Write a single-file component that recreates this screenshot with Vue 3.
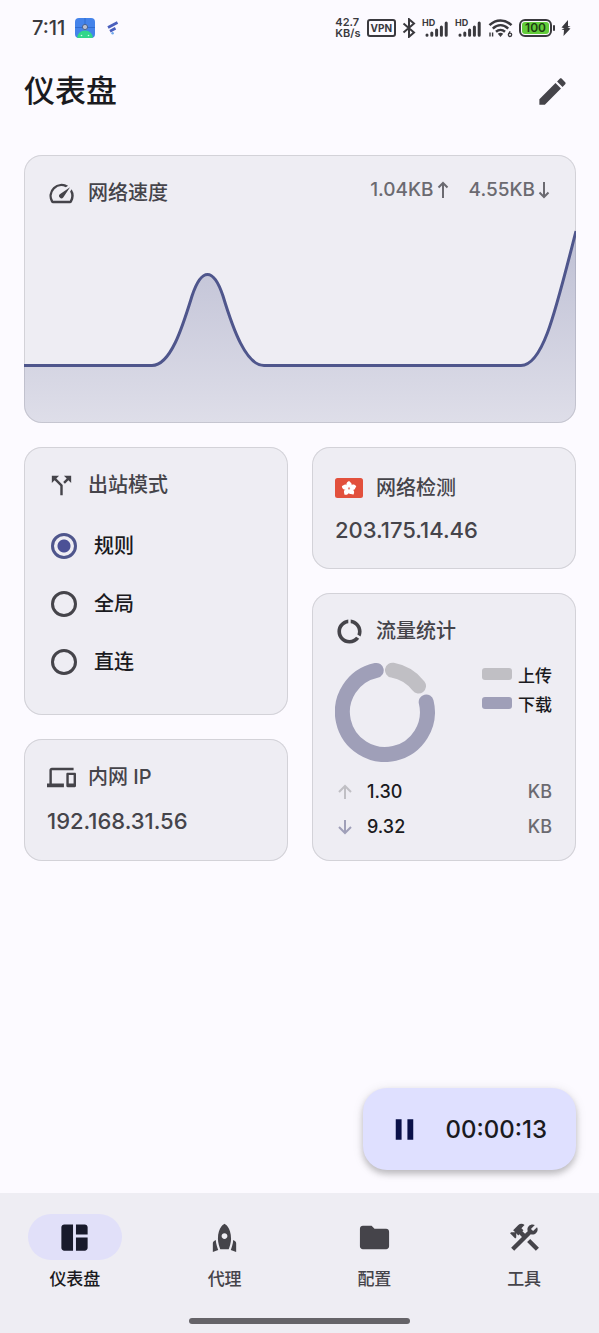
<script setup>
import { ref } from 'vue'

const modes = [
  { id: 'rule', label: '规则' },
  { id: 'global', label: '全局' },
  { id: 'direct', label: '直连' },
]
const mode = ref('rule')

const tabs = [
  {
    id: 'dashboard',
    label: '仪表盘',
    icon: 'M11 21H5c-1.1 0-2-.9-2-2V5c0-1.1.9-2 2-2h6v18zm2 0h6c1.1 0 2-.9 2-2v-7h-8v9zm8-11V5c0-1.1-.9-2-2-2h-6v7h8z',
  },
  {
    id: 'proxies',
    label: '代理',
    icon: 'M12 2.5s4.500 2.040 4.500 10.500c0 2.490-1.040 5.570-1.600 7H9.100c-.56-1.430-1.600-4.510-1.600-7C7.500 4.540 12 2.500 12 2.500zm2 8.500c0-1.100-.9-2-2-2s-2 .9-2 2 .9 2 2 2 2-.9 2-2zm-6.310 9.520c-.48-1.230-1.520-4.170-1.670-6.870l-1.130.75c-.56.38-.89 1-.89 1.670V22l3.690-1.480zM20 22v-5.930c0-.67-.33-1.290-.89-1.660l-1.130-.75c-.15 2.690-1.200 5.640-1.670 6.870L20 22z',
  },
  {
    id: 'profiles',
    label: '配置',
    icon: 'M10 4H4c-1.100 0-1.990.9-1.990 2L2 18c0 1.100.9 2 2 2h16c1.100 0 2-.9 2-2V8c0-1.100-.9-2-2-2h-8l-2-2z',
  },
  {
    id: 'tools',
    label: '工具',
    icon: 'M13.780 15.170l2.120-2.120 6 6-2.120 2.120zM17.500 10c1.930 0 3.500-1.570 3.500-3.500 0-.58-.16-1.120-.41-1.600l-2.700 2.700-1.490-1.490 2.700-2.700c-.48-.25-1.020-.41-1.600-.41C15.570 3 14 4.570 14 6.500c0 .41.08.8.21 1.160l-1.850 1.850-1.780-1.780.71-.71-1.410-1.410L12 3.490c-1.170-1.170-3.070-1.170-4.240 0L4.220 7.030l1.410 1.410H2.810l-.71.71 3.540 3.540.71-.71V9.150l1.410 1.410.71-.71 1.780 1.780-7.410 7.410 2.120 2.120L16.340 9.790c.36.13.75.21 1.160.21z',
  },
]
const tab = ref('dashboard')

const signals = [0, 1]
const petals = [0, 72, 144, 216, 288]
</script>

<template>
  <div class="app">
    <div class="status">
      <div class="status-side">
        <span class="clock">7:11</span>
        <svg class="app-badge" viewBox="0 0 20 20" aria-hidden="true">
          <defs>
            <clipPath id="badge-clip"><rect width="20" height="20" rx="4" /></clipPath>
          </defs>
          <g clip-path="url(#badge-clip)">
            <rect width="20" height="20" fill="#4483ea" />
            <path d="M0 9.500h20M10 0v9" stroke="#2f6cd0" stroke-width="1" />
            <path d="M2 20a8 7.500 0 0 1 16 0z" fill="#33d68b" />
            <circle cx="10" cy="9" r="2.600" fill="#b9bfd0" stroke="#4a638f" />
            <circle cx="6.500" cy="17.500" r=".8" fill="#c9ffe4" />
            <circle cx="13.500" cy="17.500" r=".8" fill="#c9ffe4" />
          </g>
        </svg>
        <svg class="proxy-mark" viewBox="0 0 12 14" aria-hidden="true">
          <g fill="none" stroke="#4a5fbd" stroke-width="2.800">
            <path d="M1 6.500l9.500-5" />
            <path d="M3 10.200l5.500-2.900" />
          </g>
          <circle cx="5.600" cy="12.300" r="1.200" fill="#6fa8ec" />
        </svg>
      </div>
      <div class="status-side">
        <span class="rate"><span>42.7</span><span>KB/s</span></span>
        <span class="vpn">VPN</span>
        <svg class="bluetooth" viewBox="0 0 14 20" aria-hidden="true">
          <path d="M1.500 5.500l10.500 9L7 18.800V1.200l5 4.300-10.500 9" fill="none" stroke="#3a393e" stroke-width="2" />
        </svg>
        <span v-for="s in signals" :key="s" class="signal">
          <span class="hd">HD</span>
          <svg viewBox="0 0 24 16" aria-hidden="true">
            <g stroke="#3a393e" stroke-width="3" stroke-linecap="round">
              <path d="M2 14v.2M6.800 12v2.200M11.600 9v5.200M16.400 6v8.200M21.200 2v12.200" />
            </g>
          </svg>
        </span>
        <svg class="wifi" viewBox="0 0 25 20" aria-hidden="true">
          <g fill="none" stroke="#3a393e" stroke-width="2.500">
            <path d="M1.500 7.200C8 .8 17 .8 23.500 7.200" />
            <path d="M4.800 10.600c4.700-4.400 10.700-4.400 15.400 0" />
            <path d="M8 13.800c2.700-2.400 6.300-2.400 9 0" />
          </g>
          <path d="M9.800 15.700c1.600-1.200 3.800-1.200 5.400 0L12.500 19z" fill="#3a393e" />
          <path d="M2 18.500v-4M4.600 14.500v4" stroke="#3a393e" stroke-width="1.400" />
          <circle cx="22" cy="16.800" r="1.700" fill="none" stroke="#3a393e" stroke-width="1.300" />
          <path d="M20.600 16.200l1.500-3" stroke="#3a393e" stroke-width="1.300" />
        </svg>
        <span class="battery"><span>100</span></span>
        <svg class="bolt" viewBox="0 0 10 16" aria-hidden="true">
          <path d="M7 0L.5 7.500l3 .8-3 1.200 2.500.6L2.500 16 9.500 8.500l-3-.8 3-1.200-2.500-.6z" fill="#3a393e" />
        </svg>
      </div>
    </div>

    <header class="bar">
      <h1>仪表盘</h1>
      <button class="edit" type="button" aria-label="编辑">
        <svg class="icon-lg" viewBox="0 0 24 24" aria-hidden="true">
          <path d="M3 17.250V21h3.750L17.810 9.940l-3.750-3.750L3 17.250zM20.710 7.040c.39-.39.39-1.020 0-1.410l-2.340-2.340c-.39-.39-1.020-.39-1.410 0l-1.830 1.830 3.750 3.750 1.830-1.830z" />
        </svg>
      </button>
    </header>

    <main>
      <div class="grid">
        <section class="card speed">
          <div class="speed-head">
            <h2 class="title">
              <svg class="icon" viewBox="0 0 24 24" aria-hidden="true">
                <path d="M20.380 8.570l-1.230 1.850a8 8 0 0 1-.22 7.580H5.070A8 8 0 0 1 15.580 6.850l1.850-1.230A10 10 0 0 0 3.350 19a2 2 0 0 0 1.720 1h13.850a2 2 0 0 0 1.740-1 10 10 0 0 0-.27-10.440zm-9.790 6.840a2 2 0 0 0 2.830 0l5.660-8.490-8.490 5.660a2 2 0 0 0 0 2.830z" />
              </svg>
              网络速度
            </h2>
            <p class="rates">
              <span>1.04KB<svg class="arrow" viewBox="0 0 12 18" aria-hidden="true"><path d="M6 17V2M1.500 6.500L6 2l4.500 4.500" /></svg></span>
              <span>4.55KB<svg class="arrow" viewBox="0 0 12 18" aria-hidden="true"><path d="M6 1v15M1.500 11.500L6 16l4.500-4.500" /></svg></span>
            </p>
          </div>
          <svg class="chart" viewBox="0 0 552 198" preserveAspectRatio="none" aria-hidden="true">
            <defs>
              <linearGradient id="chart-fill" x1="0" y1="0" x2="0" y2="1">
                <stop offset="0" stop-color="#4f568c" stop-opacity=".3" />
                <stop offset="1" stop-color="#4f568c" stop-opacity=".1" />
              </linearGradient>
            </defs>
            <path
              d="M0 140.500H128C147 140.500 159 100 168 71C173 56 178 49.500 183.500 49.500C189 49.500 194 56 199 71C209 104 222 140.500 240 140.500H497C519 140.500 531 88 552 6V198H0z"
              fill="url(#chart-fill)"
            />
            <path
              d="M0 140.500H128C147 140.500 159 100 168 71C173 56 178 49.500 183.500 49.500C189 49.500 194 56 199 71C209 104 222 140.500 240 140.500H497C519 140.500 531 88 552 6"
              fill="none"
              stroke="#4f568c"
              stroke-width="3"
              vector-effect="non-scaling-stroke"
            />
          </svg>
        </section>

        <section class="card tall">
          <h2 class="title">
            <svg class="icon" viewBox="0 0 24 24" aria-hidden="true">
              <path d="M14 4l2.290 2.290-2.880 2.880 1.420 1.420 2.880-2.880L20 10V4zm-4 0H4v6l2.290-2.290 4.710 4.700V20h2v-8.410l-5.290-5.300z" />
            </svg>
            出站模式
          </h2>
          <div class="modes">
            <label v-for="m in modes" :key="m.id" class="mode">
              <input v-model="mode" type="radio" name="mode" :value="m.id" />
              {{ m.label }}
            </label>
          </div>
        </section>

        <section class="card detect">
          <h2 class="title">
            <svg class="flag" viewBox="0 0 28 20" aria-hidden="true">
              <rect width="28" height="20" rx="2.500" fill="#e2503c" />
              <g transform="translate(14 10.500)" fill="#fff">
                <path v-for="a in petals" :key="a" :transform="`rotate(${a})`" d="M0-.5C-3.600-2.300-3.400-6.500.3-7.600C.4-6.600 3.200-5.800 2.700-3.400C2.400-1.800.9-1 0-.5z" />
              </g>
              <circle cx="14" cy="10.500" r="1" fill="#e88a7e" />
            </svg>
            网络检测
          </h2>
          <p class="ip">203.175.14.46</p>
        </section>

        <section class="card tall traffic">
          <h2 class="title">
            <svg class="icon" viewBox="0 0 24 24" aria-hidden="true">
              <path d="M13 2.050v3.030c3.390.49 6 3.390 6 6.920 0 .9-.18 1.750-.48 2.540l2.600 1.530c.56-1.240.88-2.620.88-4.070 0-5.180-3.950-9.450-9-9.950zM12 19c-3.870 0-7-3.130-7-7 0-3.530 2.610-6.430 6-6.920V2.050c-5.060.5-9 4.760-9 9.950 0 5.520 4.470 10 9.990 10 3.310 0 6.240-1.610 8.060-4.090l-2.600-1.530C16.170 17.980 14.210 19 12 19z" />
            </svg>
            流量统计
          </h2>
          <div class="usage">
            <svg class="donut" viewBox="0 0 100 100" aria-hidden="true">
              <g fill="none" stroke-width="15" stroke-linecap="round">
                <path d="M57.500 8.200A42.500 42.500 0 0 1 83.500 24" stroke="#c0bfc4" />
                <path d="M91.200 40A42.500 42.500 0 1 1 41.200 8.400" stroke="#9f9fb8" />
              </g>
            </svg>
            <ul class="legend">
              <li><i class="swatch up"></i>上传</li>
              <li><i class="swatch down"></i>下载</li>
            </ul>
          </div>
          <div class="totals">
            <div class="total">
              <svg class="dir up" viewBox="0 0 16 16" aria-hidden="true"><path d="M8 15V2M2 8l6-6 6 6" /></svg>
              <span>1.30</span><span class="unit">KB</span>
            </div>
            <div class="total">
              <svg class="dir down" viewBox="0 0 16 16" aria-hidden="true"><path d="M8 1v13M2 8l6 6 6-6" /></svg>
              <span>9.32</span><span class="unit">KB</span>
            </div>
          </div>
        </section>

        <section class="card">
          <h2 class="title">
            <svg class="icon" viewBox="0 0 24 24" aria-hidden="true">
              <path d="M4 6h18V4H4c-1.100 0-2 .9-2 2v11H0v3h14v-3H4V6zm19 2h-6c-.55 0-1 .45-1 1v10c0 .55.45 1 1 1h6c.55 0 1-.45 1-1V9c0-.55-.45-1-1-1zm-1 9h-4v-7h4v7z" />
            </svg>
            内网 IP
          </h2>
          <p class="ip">192.168.31.56</p>
        </section>
      </div>

      <button class="fab" type="button">
        <svg class="icon-lg" viewBox="0 0 24 24" aria-hidden="true">
          <path d="M6 19h4V5H6v14zm8-14v14h4V5h-4z" />
        </svg>
        00:00:13
      </button>
    </main>

    <nav>
      <div class="tabs">
        <button
          v-for="t in tabs"
          :key="t.id"
          type="button"
          class="tab"
          :class="{ active: tab === t.id }"
          @click="tab = t.id"
        >
          <span class="pill">
            <svg class="icon-lg" viewBox="0 0 24 24" aria-hidden="true"><path :d="t.icon" /></svg>
          </span>
          {{ t.label }}
        </button>
      </div>
      <div class="home"></div>
    </nav>
  </div>
</template>

<style>
body {
  background: #fcfaff;
}
</style>

<style scoped>
.app {
  display: flex;
  flex-direction: column;
  min-height: 100vh;
  background: #fcfaff;
  color: #1a1a20;
  font-family: Inter, "Noto Sans CJK SC", sans-serif;
  font-weight: 500;
}

h1,
h2,
p,
ul {
  margin: 0;
  padding: 0;
  font-weight: inherit;
}

button {
  border: 0;
  padding: 0;
  background: none;
  color: inherit;
  font: inherit;
  cursor: pointer;
}

svg {
  display: block;
  flex: none;
}

.icon {
  width: 29px;
  height: 29px;
  fill: currentColor;
}

.icon-lg {
  width: 35px;
  height: 35px;
  fill: currentColor;
}

/* status bar */
.status {
  display: flex;
  justify-content: space-between;
  height: 56px;
  padding: 0 28px 0 32px;
  color: #3a393e;
}

.status-side {
  display: flex;
  align-items: center;
  gap: 6px;
}

.clock {
  margin-right: 4px;
  font-size: 20px;
}

.app-badge {
  width: 20px;
  height: 20px;
  margin-right: 6px;
}

.proxy-mark {
  width: 12px;
  height: 14px;
}

.rate {
  display: flex;
  flex-direction: column;
  font-size: 11px;
  font-weight: 600;
  line-height: 11px;
}

.vpn {
  border: 2px solid currentColor;
  border-radius: 3px;
  padding: 0 2px;
  font-size: 10px;
  font-weight: 700;
  line-height: 14px;
}

.bluetooth {
  width: 14px;
  height: 20px;
}

.signal {
  display: grid;
  width: 27px;
}

.signal > * {
  grid-area: 1 / 1;
}

.signal svg {
  width: 24px;
  height: 16px;
  margin-top: 2px;
  justify-self: end;
}

.hd {
  font-size: 9px;
  font-weight: 700;
  line-height: 8px;
}

.wifi {
  width: 25px;
  height: 20px;
}

.battery {
  position: relative;
  margin-right: 3px;
  border: 2px solid currentColor;
  border-radius: 6px;
  padding: 1px;
}

.battery span {
  display: block;
  border-radius: 3px;
  padding: 0 3px;
  background: #62cc3a;
  color: #1d3d12;
  font-size: 12px;
  font-weight: 600;
  line-height: 12px;
}

.battery::after {
  content: "";
  position: absolute;
  top: 4px;
  right: -5px;
  width: 2px;
  height: 6px;
  border-radius: 1px;
  background: currentColor;
}

.bolt {
  width: 10px;
  height: 16px;
}

/* title bar */
.bar {
  display: flex;
  align-items: center;
  justify-content: space-between;
  height: 70px;
  padding: 0 29px 0 24px;
}

h1 {
  font-size: 31px;
  line-height: 40px;
}

.edit {
  color: #45444a;
}

/* cards */
main {
  display: flex;
  flex: 1;
  flex-direction: column;
  padding: 29px 23px 23px 24px;
}

.grid {
  display: grid;
  grid-template-columns: 1fr 1fr;
  grid-auto-rows: minmax(122px, auto);
  gap: 24px;
}

.card {
  border-radius: 18px;
  padding: 23px 24px 17px 23px;
  background: #eeedf3;
  box-shadow: inset 0 0 0 1px #d3d2d8;
  color: #45444a;
}

.tall {
  grid-row: span 2;
}

.title {
  display: flex;
  align-items: center;
  gap: 12px;
  font-size: 20px;
  line-height: 30px;
}

.speed {
  display: flex;
  flex-direction: column;
  grid-column: 1 / -1;
  grid-row: span 2;
  overflow: hidden;
  padding: 0;
}

.speed-head {
  display: flex;
  justify-content: space-between;
  padding: 23px 26px 0 23px;
}

.rates {
  display: flex;
  gap: 20px;
  color: #6b6a70;
  font-size: 19px;
  line-height: 24px;
}

.rates span {
  display: flex;
  align-items: center;
  gap: 3px;
  height: 24px;
}

.arrow {
  width: 12px;
  height: 18px;
  fill: none;
  stroke: currentColor;
  stroke-width: 2;
}

.chart {
  width: 100%;
  height: 198px;
  margin-top: auto;
}

.modes {
  margin-top: 17px;
}

.mode {
  display: flex;
  align-items: center;
  gap: 17px;
  height: 58px;
  padding-left: 4px;
  color: #1a1a20;
  font-size: 20px;
  line-height: 28px;
}

.mode input {
  appearance: none;
  width: 26px;
  height: 26px;
  margin: 0;
  border: 3px solid #45444a;
  border-radius: 50%;
}

.mode input:checked {
  border-color: #4f568c;
  background: radial-gradient(circle, #4c5196 6px, transparent 7px);
}

.flag {
  width: 28px;
  height: 20px;
}

.detect .title {
  gap: 13px;
  line-height: 36px;
}

.detect .ip {
  margin-top: 9px;
}

.ip {
  margin-top: 14px;
  font-size: 22px;
  line-height: 30px;
}

.usage {
  display: flex;
  align-items: flex-start;
  justify-content: space-between;
  margin-top: 16px;
}

.donut {
  width: 100px;
  height: 100px;
}

.legend {
  color: #1a1a20;
  font-size: 17px;
  line-height: 29px;
  list-style: none;
}

.legend li {
  display: flex;
  align-items: center;
  gap: 6px;
}

.swatch {
  width: 30px;
  height: 12px;
  margin-bottom: 5px;
  border-radius: 3px;
}

.swatch.up {
  background: #c0bfc4;
}

.swatch.down {
  background: #9f9fb8;
}

.totals {
  margin-top: 12px;
}

.total {
  display: flex;
  align-items: center;
  gap: 14px;
  height: 35px;
  padding-left: 2px;
  color: #1a1a20;
  font-size: 18px;
}

.unit {
  margin-left: auto;
  color: #6b6a70;
}

.dir {
  width: 16px;
  height: 16px;
  fill: none;
  stroke-width: 2;
}

.dir.up {
  stroke: #c0bfc4;
}

.dir.down {
  stroke: #9f9fb8;
}

/* run timer */
.fab {
  display: flex;
  align-items: center;
  align-self: flex-end;
  gap: 23px;
  height: 82px;
  margin-top: auto;
  border-radius: 24px;
  padding: 0 29px 0 24px;
  background: #dfe0ff;
  box-shadow: 0 4px 6px rgba(0, 0, 0, 0.2), 0 2px 12px rgba(0, 0, 0, 0.1);
  font-size: 24px;
}

.fab svg {
  fill: #0a1149;
}

/* bottom navigation */
nav {
  background: #eeedf3;
}

.tabs {
  display: grid;
  grid-template-columns: repeat(4, 1fr);
  padding: 21px 0 27px;
}

.tab {
  display: flex;
  flex-direction: column;
  align-items: center;
  gap: 7px;
  color: #45444a;
  font-size: 17px;
  line-height: 24px;
}

.pill {
  display: flex;
  align-items: center;
  justify-content: center;
  width: 94px;
  height: 46px;
  border-radius: 23px;
}

.active {
  color: #1a1a20;
}

.active .pill {
  background: #e1e0f9;
  color: #181a2c;
}

.home {
  width: 37%;
  height: 6px;
  margin: 0 auto 9px;
  border-radius: 3px;
  background: #656368;
}
</style>
